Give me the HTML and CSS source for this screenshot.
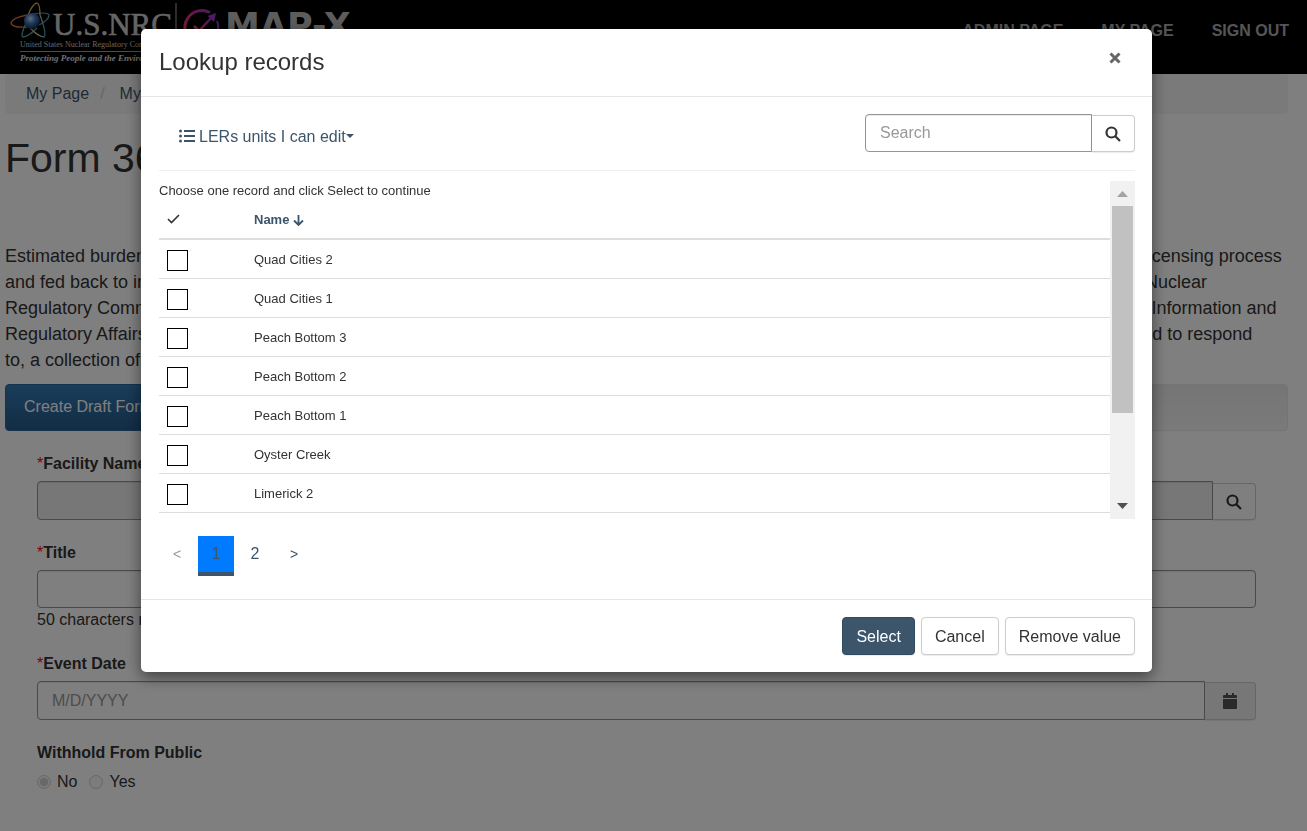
FILE: index.html
```html
<!DOCTYPE html>
<html lang="en">

<head>
    <meta charset="UTF-8">
    <meta name="viewport" content="width=device-width, initial-scale=1.0">
    <title>Form 366</title>
    <link rel="stylesheet" href="styles.css">
</head>

<body>

    <div class="navbar">
        <a href="#" class="brand">
            <svg width="360" height="74" viewBox="0 0 360 74" role="img" aria-label="U.S.NRC MAP-X">
                <defs>
                    <radialGradient id="globe" cx="40%" cy="35%" r="65%">
                        <stop offset="0" stop-color="#c4dcf4" />
                        <stop offset="0.45" stop-color="#4379bd" />
                        <stop offset="1" stop-color="#122a58" />
                    </radialGradient>
                    <linearGradient id="orbit" x1="0" x2="1">
                        <stop offset="0" stop-color="#e0754a" />
                        <stop offset="0.5" stop-color="#e8d9a8" />
                        <stop offset="1" stop-color="#3fa3b5" />
                    </linearGradient>
                    <linearGradient id="ring" x1="0" y1="1" x2="1" y2="0">
                        <stop offset="0" stop-color="#f0503c" />
                        <stop offset="0.5" stop-color="#dd2c8c" />
                        <stop offset="1" stop-color="#8a35c8" />
                    </linearGradient>
                </defs>
                <!-- atom -->
                <g fill="none" stroke-width="1.3">
                    <path d="M27 15Q12 18 11 23Q12 28 27 27" stroke="#e0754a" />
                    <path d="M28 15Q47 11 49 15Q49 20 39 25" stroke="#3fa3b5" />
                    <path d="M27 17Q33 3 37 3Q40 4 40 15" stroke="#d8b45a" />
                    <path d="M26 23Q20 37 23 37Q28 37 37 28" stroke="#4fa89a" />
                    <path d="M40 15Q47 34 44 37Q39 37 30 28" stroke="url(#orbit)" />
                </g>
                <circle cx="32" cy="21" r="8" fill="url(#globe)" />
                <text x="53" y="35" class="logo-nrc">U.S.NRC</text>
                <text x="20" y="47" class="logo-agency">United States Nuclear Regulatory Commission</text>
                <path d="M20 51.500H170" stroke="#999" />
                <text x="20" y="61" class="logo-motto">Protecting People and the Environment</text>
                <path d="M176 3V62" stroke="#777" stroke-width="1.500" />
                <!-- map-x mark -->
                <path d="M210 12.500A17 17 0 1 0 216 37" fill="none" stroke="url(#ring)" stroke-width="3" />
                <path d="M194 26L199 31L212 17" fill="none" stroke="url(#ring)" stroke-width="2.500" />
                <path d="M216 13L207.500 16L214 22Z" fill="#a137c4" />
                <path d="M217 21Q219 25 218 30" fill="none" stroke="#8a35c8" stroke-width="2" />
                <text x="225" y="38" class="logo-mapx">MAP-X</text>
            </svg>
        </a>
        <div class="nav-links">
            <a href="#">ADMIN PAGE</a>
            <a href="#">MY PAGE</a>
            <a href="#">SIGN OUT</a>
        </div>
    </div>

    <div class="page">
        <div class="breadcrumb">
            <a href="#">My Page</a>
            <span class="separator">/</span>
            <a href="#">My Reports</a>
        </div>
        <h1>Form 366</h1>
        <p class="burden">
            Estimated burden per response to comply with this mandatory collection request: 80 hours. Reported lessons learned are incorporated into the licensing process<br>
            and fed back to industry. Send comments regarding burden estimate to the FOIA, Library, and Information Collections Branch (T-6 A10M), U.S. Nuclear<br>
            Regulatory Commission, Washington, DC 20555-0001, or by e-mail to Infocollects.Resource@nrc.gov, and the OMB reviewer at: OMB Office of Information and<br>
            Regulatory Affairs, (3150-0104), 725 17th Street NW, Washington, DC 20503. The NRC may not conduct or sponsor, and a person is not required to respond<br>
            to, a collection of information.
        </p>
        <div class="steps">
            <div class="step">Create Draft Form</div>
        </div>

        <form class="report-form">
            <div class="field">
                <label for="facility"><span class="required">*</span>Facility Name</label>
                <div class="input-group">
                    <input type="text" id="facility" class="control readonly" readonly>
                    <button type="button" class="btn icon-btn" aria-label="Launch lookup">
                        <svg class="icon" viewBox="0 0 16 16"><circle cx="6.500" cy="6.500" r="5" /><path d="M10.300 10.300L15 15" /></svg>
                    </button>
                </div>
            </div>
            <div class="field">
                <label for="title"><span class="required">*</span>Title</label>
                <input type="text" id="title" class="control">
                <div class="help">50 characters remaining</div>
            </div>
            <div class="field">
                <label for="event-date"><span class="required">*</span>Event Date</label>
                <div class="input-group">
                    <input type="text" id="event-date" class="control" placeholder="M/D/YYYY">
                    <button type="button" class="btn calendar-btn" aria-label="Choose a date">
                        <svg class="calendar" viewBox="0 0 16 16"><path d="M4 0h2v2h4V0h2v2h2q1 0 1 1v2H1V3q0-1 1-1h2zM1 6h14v9q0 1-1 1H2q-1 0-1-1z" /></svg>
                    </button>
                </div>
            </div>
            <fieldset class="field">
                <legend>Withhold From Public</legend>
                <div class="radios">
                    <input type="radio" name="withhold" id="no" checked disabled><label for="no">No</label>
                    <input type="radio" name="withhold" id="yes" disabled><label for="yes">Yes</label>
                </div>
            </fieldset>
        </form>
    </div>

    <!-- The Modal -->
    <div class="modal">
        <div class="modal-content" role="dialog" aria-labelledby="modal-title">
            <div class="modal-header">
                <h2 id="modal-title">Lookup records</h2>
                <button type="button" class="close" aria-label="Close">
                    <svg viewBox="0 0 12 12"><path d="M1.500 1.500L10.500 10.500M10.500 1.500L1.500 10.500" /></svg>
                </button>
            </div>
            <div class="modal-body">
                <div class="toolbar">
                    <button type="button" class="view-select">
                        <svg class="list-icon" viewBox="0 0 16 14"><path d="M5 2H16M5 7H16M5 12H16" /><circle cx="1.500" cy="2" r="1.500" /><circle cx="1.500" cy="7" r="1.500" /><circle cx="1.500" cy="12" r="1.500" /></svg>
                        <span>LERs units I can edit</span>
                        <span class="caret"></span>
                    </button>
                    <div class="input-group search">
                        <input type="text" class="control" placeholder="Search" aria-label="Search">
                        <button type="button" class="btn icon-btn" aria-label="Search">
                            <svg class="icon" viewBox="0 0 16 16"><circle cx="6.500" cy="6.500" r="5" /><path d="M10.300 10.300L15 15" /></svg>
                        </button>
                    </div>
                </div>

                <div class="records">
                    <div class="records-list">
                        <p>Choose one record and click Select to continue</p>
                        <table>
                            <thead>
                                <tr>
                                    <th class="check-col"><svg class="check" viewBox="0 0 13 10"><path d="M1 5L4.500 8.500L12 1" /></svg></th>
                                    <th><a href="#">Name <svg class="arrow" viewBox="0 0 11 12"><path d="M5.500 1V11M1 6.500L5.500 11L10 6.500" /></svg></a></th>
                                </tr>
                            </thead>
                            <tbody>
                                <tr><td><input type="checkbox" id="r1"></td><td><label for="r1">Quad Cities 2</label></td></tr>
                                <tr><td><input type="checkbox" id="r2"></td><td><label for="r2">Quad Cities 1</label></td></tr>
                                <tr><td><input type="checkbox" id="r3"></td><td><label for="r3">Peach Bottom 3</label></td></tr>
                                <tr><td><input type="checkbox" id="r4"></td><td><label for="r4">Peach Bottom 2</label></td></tr>
                                <tr><td><input type="checkbox" id="r5"></td><td><label for="r5">Peach Bottom 1</label></td></tr>
                                <tr><td><input type="checkbox" id="r6"></td><td><label for="r6">Oyster Creek</label></td></tr>
                                <tr><td><input type="checkbox" id="r7"></td><td><label for="r7">Limerick 2</label></td></tr>
                            </tbody>
                        </table>
                    </div>
                    <div class="scrollbar">
                        <svg class="scroll-arrow" viewBox="0 0 11 6"><path d="M0 6L5.500 0L11 6Z" fill="#a3a3a3" /></svg>
                        <div class="scroll-track"><div class="scroll-thumb"></div></div>
                        <svg class="scroll-arrow" viewBox="0 0 11 6"><path d="M0 0H11L5.500 6Z" fill="#505050" /></svg>
                    </div>
                </div>

                <div class="pagination">
                    <a href="#" class="step-link disabled">&lt;</a>
                    <a href="#" class="active">1</a>
                    <a href="#">2</a>
                    <a href="#" class="step-link">&gt;</a>
                </div>
            </div>
            <div class="modal-footer">
                <button type="button" class="btn primary">Select</button>
                <button type="button" class="btn">Cancel</button>
                <button type="button" class="btn">Remove value</button>
            </div>
        </div>
    </div>

</body>

</html>
```

FILE: styles.css
```css
* {
    margin: 0;
    padding: 0;
    box-sizing: border-box;
}

body {
    font-family: "Liberation Sans", Arial, sans-serif;
    font-size: 16px;
    line-height: 23px;
    color: #333;
    background-color: #fff;
    min-height: 100vh;
    overflow: hidden;
}

a {
    color: #3c556b;
    text-decoration: none;
}

button,
input {
    font: inherit;
    color: inherit;
}

button {
    cursor: pointer;
}
/* Navbar */

.navbar {
    display: flex;
    justify-content: space-between;
    height: 74px;
    background-color: #000;
}

.brand svg {
    display: block;
}

.nav-links {
    display: flex;
    gap: 38px;
    padding: 19px 18px 0 0;
    white-space: nowrap;
}

.nav-links a {
    color: #aaa;
    font-weight: bold;
}

.logo-nrc {
    font-family: "Liberation Serif", serif;
    font-size: 31px;
    fill: #ccc;
    stroke: #ccc;
    stroke-width: 0.6;
}

.logo-agency {
    font-family: "Liberation Serif", serif;
    font-size: 8px;
    fill: #ccc;
}

.logo-motto {
    font-family: "Liberation Serif", serif;
    font-size: 9px;
    font-style: italic;
    font-weight: bold;
    fill: #ddd;
}

.logo-mapx {
    font-family: "DejaVu Sans", sans-serif;
    font-size: 35px;
    font-weight: bold;
    fill: #bbb;
}
/* Page */

.page {
    padding: 0 19px 0 5px;
}

.breadcrumb {
    display: flex;
    gap: 11px;
    padding: 8px 21px;
    line-height: 24px;
    background-color: #f5f5f5;
    border-radius: 4px;
}

.separator {
    color: #ccc;
    padding-right: 4px;
}

h1 {
    margin: 21px 0 62px;
    font-size: 41px;
    font-weight: normal;
    line-height: 46px;
}

.burden {
    font-size: 18px;
    line-height: 26px;
    white-space: nowrap;
}

.steps {
    display: flex;
    margin: 11px 0 21px;
    background: linear-gradient(#ebebeb, #f5f5f5);
    border: 1px solid #e8e8e8;
    border-radius: 4px;
}

.step {
    margin: -1px;
    padding: 10px 18px 12px;
    width: 25%;
    color: #fff;
    background: linear-gradient(#337ab7, #265a88);
    border: 1px solid #2b669a;
    border-radius: 4px 0 0 4px;
}

.report-form {
    padding: 0 32px;
}

.field {
    margin-bottom: 21px;
    border: none;
}

.field > label,
legend {
    display: block;
    margin-bottom: 6px;
    font-weight: bold;
}

.required {
    color: #f00;
    font-weight: normal;
}

.control {
    display: block;
    width: 100%;
    height: 38px;
    padding: 0 14px;
    background-color: #fff;
    border: 1px solid #949494;
    border-radius: 4px;
    box-shadow: inset 0 1px 1px rgba(0, 0, 0, 0.08);
}

.control::placeholder {
    color: #999;
    opacity: 1;
}

.readonly {
    background-color: #eee;
}

.input-group {
    display: flex;
    align-items: flex-end;
}

.input-group .control {
    flex: 1;
    min-width: 0;
    border-radius: 4px 0 0 4px;
}

.report-form .input-group .control {
    height: 39px;
}

.btn {
    height: 38px;
    padding: 0 13px;
    color: #333;
    background-color: #fff;
    border: 1px solid #ccc;
    border-radius: 4px;
    box-shadow: 0 1px 1px rgba(0, 0, 0, 0.08);
}

.icon-btn {
    display: flex;
    align-items: center;
    height: 37px;
    border-left: none;
    border-radius: 0 4px 4px 0;
}

.calendar-btn {
    display: flex;
    align-items: center;
    padding: 0 17px;
    background-color: #eee;
    border-left: none;
    border-radius: 0 4px 4px 0;
}

.icon {
    width: 16px;
    height: 16px;
    fill: none;
    stroke: #333;
    stroke-width: 2.2;
}

.calendar {
    width: 16px;
    height: 16px;
    fill: #555;
}

.radios {
    display: flex;
    align-items: center;
}

.radios input {
    width: 14px;
    height: 14px;
}

.radios label {
    margin: 0 12px 0 6px;
}
/* Modal container */

.modal {
    position: fixed;
    z-index: 1;
    left: 0;
    top: 0;
    width: 100%;
    height: 100%;
    padding: 29px 14px 29px 0;
    background-color: rgba(0, 0, 0, 0.5);
}

.modal-content {
    width: 90%;
    max-width: 1011px;
    margin: 0 auto;
    background-color: #fff;
    border-radius: 5px;
    box-shadow: 0 5px 15px rgba(0, 0, 0, 0.5);
}

.modal-header {
    display: flex;
    justify-content: space-between;
    align-items: flex-start;
    padding: 16px 17px 17px 18px;
    border-bottom: 1px solid #e5e5e5;
}

.modal-header h2 {
    font-size: 24px;
    font-weight: normal;
    line-height: 34px;
}

.close {
    padding: 7px 14px;
    background: none;
    border: none;
}

.close svg {
    display: block;
    width: 12px;
    height: 12px;
    fill: none;
    stroke: #666;
    stroke-width: 3;
}

.modal-body {
    padding: 17px 17px 23px 18px;
}

.toolbar {
    display: flex;
    justify-content: space-between;
    align-items: center;
    padding-bottom: 18px;
    border-bottom: 1px solid #eee;
}

.view-select {
    display: flex;
    align-items: center;
    padding: 10px 20px 4px;
    color: #3c556b;
    background: none;
    border: none;
}

.list-icon {
    width: 16px;
    height: 14px;
    margin-right: 4px;
    fill: #3c556b;
    stroke: #3c556b;
    stroke-width: 2;
}

.list-icon circle {
    stroke: none;
}

.caret {
    border-top: 4px solid #3c556b;
    border-left: 4px solid transparent;
    border-right: 4px solid transparent;
}

.search {
    width: 270px;
}
/* Records */

.records {
    display: flex;
    height: 338px;
    margin-top: 10px;
    font-size: 13px;
    line-height: 19px;
}

.records-list {
    flex: 1;
    overflow: hidden;
}

table {
    width: 100%;
    border-spacing: 0;
}

th {
    height: 40px;
    padding: 0 8px;
    text-align: left;
    border-bottom: 2px solid #ddd;
}

td {
    height: 39px;
    padding: 0 8px;
    border-bottom: 1px solid #ddd;
}

.check-col {
    width: 87px;
}

.check {
    width: 13px;
    height: 10px;
    fill: none;
    stroke: #333;
    stroke-width: 1.6;
}

.arrow {
    width: 11px;
    height: 12px;
    vertical-align: -2px;
    fill: none;
    stroke: #3c556b;
    stroke-width: 1.8;
}

td input {
    appearance: none;
    display: block;
    width: 21px;
    height: 21px;
    margin-top: 2px;
    background-color: #fff;
    border: 1px solid #000;
}

.scrollbar {
    display: flex;
    flex-direction: column;
    width: 25px;
    padding: 10px 2px;
    background-color: #f1f1f1;
}

.scroll-arrow {
    align-self: center;
    width: 11px;
    height: 6px;
}

.scroll-track {
    flex: 1;
    padding: 9px 0;
}

.scroll-thumb {
    height: 72%;
    background-color: #c1c1c1;
}

.pagination {
    display: flex;
    gap: 3px;
    margin-top: 17px;
}

.pagination a {
    width: 36px;
    height: 40px;
    line-height: 36px;
    text-align: center;
}

.pagination .active {
    background-color: #007bff;
    border-bottom: 4px solid #3c556b;
}

.pagination .step-link {
    font-size: 14px;
}

.pagination .disabled {
    color: #999;
}

.modal-footer {
    display: flex;
    justify-content: flex-end;
    gap: 6px;
    padding: 17px;
    border-top: 1px solid #e5e5e5;
}

.modal-footer .primary {
    color: #fff;
    background-color: #3c556b;
    border-color: #324a60;
}
```
